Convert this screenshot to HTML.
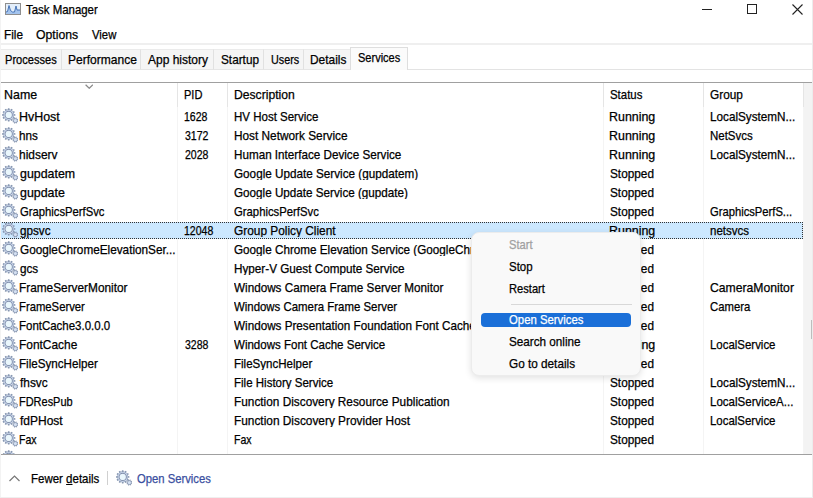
<!DOCTYPE html>
<html><head><meta charset="utf-8">
<style>
html,body{margin:0;padding:0;}
body{width:813px;height:498px;overflow:hidden;position:relative;background:#fff;font-family:"Liberation Sans",sans-serif;}
.t{position:absolute;line-height:1;white-space:nowrap;-webkit-text-stroke:0.25px currentColor;}
.g{position:absolute;}
.a{position:absolute;}
</style></head><body>
<svg width="0" height="0" style="position:absolute">
<defs>
<g id="gear">
<path fill="#8f9db6" d="M16.47 12.99 L16.16 14.01 L15.36 13.80 L14.95 14.30 L15.30 15.05 L14.35 15.55 L13.93 14.84 L13.29 14.90 L13.01 15.67 L11.99 15.36 L12.20 14.56 L11.70 14.15 L10.95 14.50 L10.45 13.55 L11.16 13.13 L11.10 12.49 L10.33 12.21 L10.64 11.19 L11.44 11.40 L11.85 10.90 L11.50 10.15 L12.45 9.65 L12.87 10.36 L13.51 10.30 L13.79 9.53 L14.81 9.84 L14.60 10.64 L15.10 11.05 L15.85 10.70 L16.35 11.65 L15.64 12.07 L15.70 12.71Z M13.41 12.60 A0.01 0.01 0 1 0 13.39 12.60 A0.01 0.01 0 1 0 13.41 12.60Z"/>
<circle cx="13.4" cy="12.6" r="1.6" fill="#d4e0f2"/>
<path fill="#8898b2" d="M13.36 6.13 L13.36 7.67 L12.02 7.80 L11.76 8.78 L12.85 9.56 L12.08 10.89 L10.86 10.34 L10.14 11.06 L10.69 12.28 L9.36 13.05 L8.58 11.96 L7.60 12.22 L7.47 13.56 L5.93 13.56 L5.80 12.22 L4.82 11.96 L4.04 13.05 L2.71 12.28 L3.26 11.06 L2.54 10.34 L1.32 10.89 L0.55 9.56 L1.64 8.78 L1.38 7.80 L0.04 7.67 L0.04 6.13 L1.38 6.00 L1.64 5.02 L0.55 4.24 L1.32 2.91 L2.54 3.46 L3.26 2.74 L2.71 1.52 L4.04 0.75 L4.82 1.84 L5.80 1.58 L5.93 0.24 L7.47 0.24 L7.60 1.58 L8.58 1.84 L9.36 0.75 L10.69 1.52 L10.14 2.74 L10.86 3.46 L12.08 2.91 L12.85 4.24 L11.76 5.02 L12.02 6.00Z M6.71 6.90 A0.01 0.01 0 1 0 6.69 6.90 A0.01 0.01 0 1 0 6.71 6.90Z"/>
<circle cx="6.7" cy="6.9" r="5.0" fill="#ccd8ee"/>
<circle cx="6.7" cy="6.9" r="3.6" fill="none" stroke="#8291ab" stroke-width="1.1"/>
<circle cx="6.7" cy="6.9" r="3.0" fill="#eaf7fc"/>
</g>
</defs>
</svg>
<div class="a" style="left:0;top:0;width:813px;height:24px;background:#fff"></div>
<svg class="a" style="left:5px;top:3px" width="16" height="12" viewBox="0 0 16 12">
<rect x="0.5" y="0.5" width="15" height="11" fill="#e3eefa" stroke="#8e8e8e"/>
<path d="M1 9 L2.5 8.5 L4 2.5 L5.5 7.5 L7.5 9 L9.5 9 L11 3 L12 7 L15 7 L15 11 L1 11Z" fill="#a4c4ee"/>
<path d="M1 9 L2.5 8.5 L4 2.5 L5.5 7.5 L7.5 9 L9.5 9 L11 3 L12 7 L15 7" fill="none" stroke="#3a6ab0" stroke-width="0.9"/>
</svg>
<div class="t" style="top:4.30px;font-size:12.4px;color:#000;left:26.34px;transform:scaleX(0.9224);transform-origin:0 0;">Task Manager</div>
<div class="a" style="left:702px;top:9px;width:10px;height:1px;background:#222"></div>
<div class="a" style="left:747px;top:4px;width:8px;height:8px;border:1px solid #222"></div>
<svg class="a" style="left:792px;top:4px" width="11" height="11" viewBox="0 0 11 11"><path d="M0.5 0.5L10.5 10.5M10.5 0.5L0.5 10.5" stroke="#222" stroke-width="1.1"/></svg>
<div class="t" style="top:29.00px;font-size:12.4px;color:#000;left:3.53px;transform:scaleX(0.9504);transform-origin:0 0;">File</div>
<div class="t" style="top:29.00px;font-size:12.4px;color:#000;left:36.22px;transform:scaleX(0.9874);transform-origin:0 0;">Options</div>
<div class="t" style="top:29.00px;font-size:12.4px;color:#000;left:92.44px;transform:scaleX(0.9125);transform-origin:0 0;">View</div>
<div class="a" style="left:0;top:43px;width:813px;height:2px;background:#efefef"></div>
<div class="a" style="left:0px;top:49px;width:61.6px;height:21px;background:#f5f5f5;border-right:1px solid #e1e1e1;border-top:1px solid #ebebeb;border-bottom:1px solid #e6e6e6;box-sizing:border-box"></div>
<div class="t" style="top:54.00px;font-size:12.4px;color:#000;left:4.69px;transform:scaleX(0.8933);transform-origin:0 0;">Processes</div>
<div class="a" style="left:61.6px;top:49px;width:79.70000000000002px;height:21px;background:#f5f5f5;border-right:1px solid #e1e1e1;border-top:1px solid #ebebeb;border-bottom:1px solid #e6e6e6;box-sizing:border-box"></div>
<div class="t" style="top:54.00px;font-size:12.4px;color:#000;left:67.61px;transform:scaleX(0.9711);transform-origin:0 0;">Performance</div>
<div class="a" style="left:141.3px;top:49px;width:73.1px;height:21px;background:#f5f5f5;border-right:1px solid #e1e1e1;border-top:1px solid #ebebeb;border-bottom:1px solid #e6e6e6;box-sizing:border-box"></div>
<div class="t" style="top:54.00px;font-size:12.4px;color:#000;left:148.37px;transform:scaleX(0.9682);transform-origin:0 0;">App history</div>
<div class="a" style="left:214.4px;top:49px;width:49.599999999999994px;height:21px;background:#f5f5f5;border-right:1px solid #e1e1e1;border-top:1px solid #ebebeb;border-bottom:1px solid #e6e6e6;box-sizing:border-box"></div>
<div class="t" style="top:54.00px;font-size:12.4px;color:#000;left:221.27px;transform:scaleX(0.9510);transform-origin:0 0;">Startup</div>
<div class="a" style="left:264px;top:49px;width:40px;height:21px;background:#f5f5f5;border-right:1px solid #e1e1e1;border-top:1px solid #ebebeb;border-bottom:1px solid #e6e6e6;box-sizing:border-box"></div>
<div class="t" style="top:54.00px;font-size:12.4px;color:#000;left:270.86px;transform:scaleX(0.8710);transform-origin:0 0;">Users</div>
<div class="a" style="left:304px;top:49px;width:46.5px;height:21px;background:#f5f5f5;border-right:1px solid #e1e1e1;border-top:1px solid #ebebeb;border-bottom:1px solid #e6e6e6;box-sizing:border-box"></div>
<div class="t" style="top:54.00px;font-size:12.4px;color:#000;left:310.32px;transform:scaleX(0.9601);transform-origin:0 0;">Details</div>
<div class="a" style="left:350px;top:47px;width:58px;height:23px;background:#fbfbfb;border:1px solid #dedede;border-bottom:none;box-sizing:border-box"></div>
<div class="t" style="top:52.10px;font-size:12.4px;color:#000;left:358.00px;transform:scaleX(0.8891);transform-origin:0 0;">Services</div>
<div class="a" style="left:408px;top:69px;width:405px;height:1px;background:#e3e3e3"></div>
<div class="a" style="left:0;top:82px;width:813px;height:1px;background:#a0a0a0"></div>
<div class="a" style="left:177px;top:83px;width:1px;height:24px;background:#e5e5e5"></div>
<div class="a" style="left:177px;top:107px;width:1px;height:347px;background:#f4f4f4"></div>
<div class="a" style="left:227px;top:83px;width:1px;height:24px;background:#e5e5e5"></div>
<div class="a" style="left:227px;top:107px;width:1px;height:347px;background:#f4f4f4"></div>
<div class="a" style="left:603px;top:83px;width:1px;height:24px;background:#e5e5e5"></div>
<div class="a" style="left:603px;top:107px;width:1px;height:347px;background:#f4f4f4"></div>
<div class="a" style="left:703px;top:83px;width:1px;height:24px;background:#e5e5e5"></div>
<div class="a" style="left:703px;top:107px;width:1px;height:347px;background:#f4f4f4"></div>
<div class="a" style="left:803px;top:83px;width:1px;height:24px;background:#e5e5e5"></div>
<div class="a" style="left:803px;top:107px;width:1px;height:347px;background:#f4f4f4"></div>
<svg class="a" style="left:84.5px;top:83.5px" width="8.5" height="5" viewBox="0 0 8.5 5"><path d="M0.6 0.8L4.25 4.3L7.9 0.8" fill="none" stroke="#8a8a8a" stroke-width="1.2"/></svg>
<div class="t" style="top:89.00px;font-size:12.4px;color:#000;left:3.67px;transform:scaleX(1.0023);transform-origin:0 0;">Name</div>
<div class="t" style="top:89.00px;font-size:12.4px;color:#000;left:183.69px;transform:scaleX(0.8917);transform-origin:0 0;">PID</div>
<div class="t" style="top:89.00px;font-size:12.4px;color:#000;left:233.50px;transform:scaleX(0.9800);transform-origin:0 0;">Description</div>
<div class="t" style="top:89.00px;font-size:12.4px;color:#000;left:609.99px;transform:scaleX(0.9221);transform-origin:0 0;">Status</div>
<div class="t" style="top:89.00px;font-size:12.4px;color:#000;left:710.21px;transform:scaleX(0.9542);transform-origin:0 0;">Group</div>
<div class="a" style="left:804px;top:83px;width:9px;height:371px;background:#f3f3f3"></div>
<div class="a" style="left:811px;top:320px;width:2px;height:19px;background:#bdbdbd"></div>
<svg class="g" style="left:2px;top:108px" width="16" height="16" viewBox="0 0 16 16"><use href="#gear"/></svg>
<div class="t" style="top:110.80px;font-size:12.4px;color:#000;left:19.28px;transform:scaleX(1.0019);transform-origin:0 0;">HvHost</div>
<div class="t" style="top:110.80px;font-size:12.4px;color:#000;left:184.41px;transform:scaleX(0.8492);transform-origin:0 0;">1628</div>
<div class="t" style="top:110.80px;font-size:12.4px;color:#000;left:233.55px;transform:scaleX(0.9284);transform-origin:0 0;width:394.2393253012049px;overflow:hidden;white-space:nowrap;text-overflow:ellipsis;">HV Host Service</div>
<div class="t" style="top:110.80px;font-size:12.4px;color:#000;left:609.47px;transform:scaleX(1.0024);transform-origin:0 0;">Running</div>
<div class="t" style="top:110.80px;font-size:12.4px;color:#000;left:709.83px;transform:scaleX(0.9452);transform-origin:0 0;">LocalSystemN...</div>
<svg class="g" style="left:2px;top:127px" width="16" height="16" viewBox="0 0 16 16"><use href="#gear"/></svg>
<div class="t" style="top:129.80px;font-size:12.4px;color:#000;left:19.48px;transform:scaleX(0.9435);transform-origin:0 0;">hns</div>
<div class="t" style="top:129.80px;font-size:12.4px;color:#000;left:184.81px;transform:scaleX(0.8492);transform-origin:0 0;">3172</div>
<div class="t" style="top:129.80px;font-size:12.4px;color:#000;left:233.52px;transform:scaleX(0.9537);transform-origin:0 0;width:383.7617647058824px;overflow:hidden;white-space:nowrap;text-overflow:ellipsis;">Host Network Service</div>
<div class="t" style="top:129.80px;font-size:12.4px;color:#000;left:609.47px;transform:scaleX(1.0024);transform-origin:0 0;">Running</div>
<div class="t" style="top:129.80px;font-size:12.4px;color:#000;left:709.85px;transform:scaleX(0.9261);transform-origin:0 0;">NetSvcs</div>
<svg class="g" style="left:2px;top:146px" width="16" height="16" viewBox="0 0 16 16"><use href="#gear"/></svg>
<div class="t" style="top:148.80px;font-size:12.4px;color:#000;left:19.46px;transform:scaleX(0.9626);transform-origin:0 0;">hidserv</div>
<div class="t" style="top:148.80px;font-size:12.4px;color:#000;left:184.67px;transform:scaleX(0.8492);transform-origin:0 0;">2028</div>
<div class="t" style="top:148.80px;font-size:12.4px;color:#000;left:233.54px;transform:scaleX(0.9419);transform-origin:0 0;width:388.5663253012048px;overflow:hidden;white-space:nowrap;text-overflow:ellipsis;">Human Interface Device Service</div>
<div class="t" style="top:148.80px;font-size:12.4px;color:#000;left:609.47px;transform:scaleX(1.0024);transform-origin:0 0;">Running</div>
<div class="t" style="top:148.80px;font-size:12.4px;color:#000;left:709.83px;transform:scaleX(0.9452);transform-origin:0 0;">LocalSystemN...</div>
<svg class="g" style="left:2px;top:165px" width="16" height="16" viewBox="0 0 16 16"><use href="#gear"/></svg>
<div class="t" style="top:167.80px;font-size:12.4px;color:#000;left:19.77px;transform:scaleX(0.9997);transform-origin:0 0;">gupdatem</div>
<div class="t" style="top:167.80px;font-size:12.4px;color:#000;left:233.91px;transform:scaleX(0.9448);transform-origin:0 0;width:387.3759999999999px;overflow:hidden;white-space:nowrap;text-overflow:ellipsis;">Google Update Service (gupdatem)</div>
<div class="t" style="top:167.80px;font-size:12.4px;color:#000;left:609.97px;transform:scaleX(0.9519);transform-origin:0 0;">Stopped</div>
<svg class="g" style="left:2px;top:184px" width="16" height="16" viewBox="0 0 16 16"><use href="#gear"/></svg>
<div class="t" style="top:186.80px;font-size:12.4px;color:#000;left:19.77px;transform:scaleX(1.0013);transform-origin:0 0;">gupdate</div>
<div class="t" style="top:186.80px;font-size:12.4px;color:#000;left:233.92px;transform:scaleX(0.9424);transform-origin:0 0;width:388.3772569444444px;overflow:hidden;white-space:nowrap;text-overflow:ellipsis;">Google Update Service (gupdate)</div>
<div class="t" style="top:186.80px;font-size:12.4px;color:#000;left:609.97px;transform:scaleX(0.9519);transform-origin:0 0;">Stopped</div>
<svg class="g" style="left:2px;top:203px" width="16" height="16" viewBox="0 0 16 16"><use href="#gear"/></svg>
<div class="t" style="top:205.80px;font-size:12.4px;color:#000;left:19.74px;transform:scaleX(0.9080);transform-origin:0 0;">GraphicsPerfSvc</div>
<div class="t" style="top:205.80px;font-size:12.4px;color:#000;left:233.93px;transform:scaleX(0.9123);transform-origin:0 0;width:401.1621428571428px;overflow:hidden;white-space:nowrap;text-overflow:ellipsis;">GraphicsPerfSvc</div>
<div class="t" style="top:205.80px;font-size:12.4px;color:#000;left:609.97px;transform:scaleX(0.9519);transform-origin:0 0;">Stopped</div>
<div class="t" style="top:205.80px;font-size:12.4px;color:#000;left:710.24px;transform:scaleX(0.9045);transform-origin:0 0;">GraphicsPerfS...</div>
<div class="a" style="left:0;top:222px;width:803px;height:17px;background:#cce8ff;box-sizing:border-box;border:1px dotted #333;border-left:none"></div>
<svg class="g" style="left:2px;top:222px" width="16" height="16" viewBox="0 0 16 16"><use href="#gear"/></svg>
<div class="t" style="top:224.80px;font-size:12.4px;color:#000;left:19.80px;transform:scaleX(0.9435);transform-origin:0 0;">gpsvc</div>
<div class="t" style="top:224.80px;font-size:12.4px;color:#000;left:184.41px;transform:scaleX(0.8492);transform-origin:0 0;">12048</div>
<div class="t" style="top:224.80px;font-size:12.4px;color:#000;left:233.91px;transform:scaleX(0.9580);transform-origin:0 0;width:382.0568910891089px;overflow:hidden;white-space:nowrap;text-overflow:ellipsis;">Group Policy Client</div>
<div class="t" style="top:224.80px;font-size:12.4px;color:#000;left:609.47px;transform:scaleX(1.0024);transform-origin:0 0;">Running</div>
<div class="t" style="top:224.80px;font-size:12.4px;color:#000;left:710.02px;transform:scaleX(0.9273);transform-origin:0 0;">netsvcs</div>
<svg class="g" style="left:2px;top:241px" width="16" height="16" viewBox="0 0 16 16"><use href="#gear"/></svg>
<div class="t" style="top:243.80px;font-size:12.4px;color:#000;left:19.71px;transform:scaleX(0.9488);transform-origin:0 0;">GoogleChromeElevationSer...</div>
<div class="t" style="top:243.80px;font-size:12.4px;color:#000;left:233.91px;transform:scaleX(0.9435);transform-origin:0 0;width:387.89743589743586px;overflow:hidden;white-space:nowrap;text-overflow:ellipsis;">Google Chrome Elevation Service (GoogleChromeElevationService)</div>
<div class="t" style="top:243.80px;font-size:12.4px;color:#000;left:609.97px;transform:scaleX(0.9519);transform-origin:0 0;">Stopped</div>
<svg class="g" style="left:2px;top:260px" width="16" height="16" viewBox="0 0 16 16"><use href="#gear"/></svg>
<div class="t" style="top:262.80px;font-size:12.4px;color:#000;left:19.80px;transform:scaleX(0.9435);transform-origin:0 0;">gcs</div>
<div class="t" style="top:262.80px;font-size:12.4px;color:#000;left:233.53px;transform:scaleX(0.9453);transform-origin:0 0;width:387.1856028368794px;overflow:hidden;white-space:nowrap;text-overflow:ellipsis;">Hyper-V Guest Compute Service</div>
<div class="t" style="top:262.80px;font-size:12.4px;color:#000;left:609.97px;transform:scaleX(0.9519);transform-origin:0 0;">Stopped</div>
<svg class="g" style="left:2px;top:279px" width="16" height="16" viewBox="0 0 16 16"><use href="#gear"/></svg>
<div class="t" style="top:281.80px;font-size:12.4px;color:#000;left:19.32px;transform:scaleX(0.9549);transform-origin:0 0;">FrameServerMonitor</div>
<div class="t" style="top:281.80px;font-size:12.4px;color:#000;left:234.44px;transform:scaleX(0.9440);transform-origin:0 0;width:387.72731357552584px;overflow:hidden;white-space:nowrap;text-overflow:ellipsis;">Windows Camera Frame Server Monitor</div>
<div class="t" style="top:281.80px;font-size:12.4px;color:#000;left:609.97px;transform:scaleX(0.9519);transform-origin:0 0;">Stopped</div>
<div class="t" style="top:281.80px;font-size:12.4px;color:#000;left:710.19px;transform:scaleX(0.9831);transform-origin:0 0;">CameraMonitor</div>
<svg class="g" style="left:2px;top:298px" width="16" height="16" viewBox="0 0 16 16"><use href="#gear"/></svg>
<div class="t" style="top:300.80px;font-size:12.4px;color:#000;left:19.37px;transform:scaleX(0.9108);transform-origin:0 0;">FrameServer</div>
<div class="t" style="top:300.80px;font-size:12.4px;color:#000;left:234.44px;transform:scaleX(0.9218);transform-origin:0 0;width:397.04039263803685px;overflow:hidden;white-space:nowrap;text-overflow:ellipsis;">Windows Camera Frame Server</div>
<div class="t" style="top:300.80px;font-size:12.4px;color:#000;left:609.97px;transform:scaleX(0.9519);transform-origin:0 0;">Stopped</div>
<div class="t" style="top:300.80px;font-size:12.4px;color:#000;left:710.23px;transform:scaleX(0.9128);transform-origin:0 0;">Camera</div>
<svg class="g" style="left:2px;top:317px" width="16" height="16" viewBox="0 0 16 16"><use href="#gear"/></svg>
<div class="t" style="top:319.80px;font-size:12.4px;color:#000;left:19.35px;transform:scaleX(0.9259);transform-origin:0 0;">FontCache3.0.0.0</div>
<div class="t" style="top:319.80px;font-size:12.4px;color:#000;left:234.44px;transform:scaleX(0.9435);transform-origin:0 0;width:387.8974358974358px;overflow:hidden;white-space:nowrap;text-overflow:ellipsis;">Windows Presentation Foundation Font Cache 3.0.0.0</div>
<div class="t" style="top:319.80px;font-size:12.4px;color:#000;left:609.97px;transform:scaleX(0.9519);transform-origin:0 0;">Stopped</div>
<svg class="g" style="left:2px;top:336px" width="16" height="16" viewBox="0 0 16 16"><use href="#gear"/></svg>
<div class="t" style="top:338.80px;font-size:12.4px;color:#000;left:19.32px;transform:scaleX(0.9613);transform-origin:0 0;">FontCache</div>
<div class="t" style="top:338.80px;font-size:12.4px;color:#000;left:184.81px;transform:scaleX(0.8492);transform-origin:0 0;">3288</div>
<div class="t" style="top:338.80px;font-size:12.4px;color:#000;left:234.44px;transform:scaleX(0.9300);transform-origin:0 0;width:393.5337889847379px;overflow:hidden;white-space:nowrap;text-overflow:ellipsis;">Windows Font Cache Service</div>
<div class="t" style="top:338.80px;font-size:12.4px;color:#000;left:609.47px;transform:scaleX(1.0024);transform-origin:0 0;">Running</div>
<div class="t" style="top:338.80px;font-size:12.4px;color:#000;left:709.86px;transform:scaleX(0.9231);transform-origin:0 0;">LocalService</div>
<svg class="g" style="left:2px;top:355px" width="16" height="16" viewBox="0 0 16 16"><use href="#gear"/></svg>
<div class="t" style="top:357.80px;font-size:12.4px;color:#000;left:19.34px;transform:scaleX(0.9377);transform-origin:0 0;">FileSyncHelper</div>
<div class="t" style="top:357.80px;font-size:12.4px;color:#000;left:233.55px;transform:scaleX(0.9317);transform-origin:0 0;width:392.84790155440413px;overflow:hidden;white-space:nowrap;text-overflow:ellipsis;">FileSyncHelper</div>
<div class="t" style="top:357.80px;font-size:12.4px;color:#000;left:609.97px;transform:scaleX(0.9519);transform-origin:0 0;">Stopped</div>
<svg class="g" style="left:2px;top:374px" width="16" height="16" viewBox="0 0 16 16"><use href="#gear"/></svg>
<div class="t" style="top:376.80px;font-size:12.4px;color:#000;left:20.12px;transform:scaleX(0.9568);transform-origin:0 0;">fhsvc</div>
<div class="t" style="top:376.80px;font-size:12.4px;color:#000;left:233.55px;transform:scaleX(0.9293);transform-origin:0 0;width:393.8616564417178px;overflow:hidden;white-space:nowrap;text-overflow:ellipsis;">File History Service</div>
<div class="t" style="top:376.80px;font-size:12.4px;color:#000;left:609.97px;transform:scaleX(0.9519);transform-origin:0 0;">Stopped</div>
<div class="t" style="top:376.80px;font-size:12.4px;color:#000;left:709.83px;transform:scaleX(0.9452);transform-origin:0 0;">LocalSystemN...</div>
<svg class="g" style="left:2px;top:393px" width="16" height="16" viewBox="0 0 16 16"><use href="#gear"/></svg>
<div class="t" style="top:395.80px;font-size:12.4px;color:#000;left:19.39px;transform:scaleX(0.8847);transform-origin:0 0;">FDResPub</div>
<div class="t" style="top:395.80px;font-size:12.4px;color:#000;left:233.52px;transform:scaleX(0.9543);transform-origin:0 0;width:383.5372149532711px;overflow:hidden;white-space:nowrap;text-overflow:ellipsis;">Function Discovery Resource Publication</div>
<div class="t" style="top:395.80px;font-size:12.4px;color:#000;left:609.97px;transform:scaleX(0.9519);transform-origin:0 0;">Stopped</div>
<div class="t" style="top:395.80px;font-size:12.4px;color:#000;left:709.85px;transform:scaleX(0.9308);transform-origin:0 0;">LocalServiceA...</div>
<svg class="g" style="left:2px;top:412px" width="16" height="16" viewBox="0 0 16 16"><use href="#gear"/></svg>
<div class="t" style="top:414.80px;font-size:12.4px;color:#000;left:20.12px;transform:scaleX(0.9673);transform-origin:0 0;">fdPHost</div>
<div class="t" style="top:414.80px;font-size:12.4px;color:#000;left:233.52px;transform:scaleX(0.9570);transform-origin:0 0;width:382.45745142857146px;overflow:hidden;white-space:nowrap;text-overflow:ellipsis;">Function Discovery Provider Host</div>
<div class="t" style="top:414.80px;font-size:12.4px;color:#000;left:609.97px;transform:scaleX(0.9519);transform-origin:0 0;">Stopped</div>
<div class="t" style="top:414.80px;font-size:12.4px;color:#000;left:709.86px;transform:scaleX(0.9231);transform-origin:0 0;">LocalService</div>
<svg class="g" style="left:2px;top:431px" width="16" height="16" viewBox="0 0 16 16"><use href="#gear"/></svg>
<div class="t" style="top:433.80px;font-size:12.4px;color:#000;left:19.43px;transform:scaleX(0.8513);transform-origin:0 0;">Fax</div>
<div class="t" style="top:433.80px;font-size:12.4px;color:#000;left:233.63px;transform:scaleX(0.8513);transform-origin:0 0;width:429.9177108433735px;overflow:hidden;white-space:nowrap;text-overflow:ellipsis;">Fax</div>
<div class="t" style="top:433.80px;font-size:12.4px;color:#000;left:609.97px;transform:scaleX(0.9519);transform-origin:0 0;">Stopped</div>
<svg class="g" style="left:2px;top:450px" width="16" height="16" viewBox="0 0 16 16"><use href="#gear"/></svg>
<div class="a" style="left:0;top:454px;width:813px;height:44px;background:#fff;border-top:1px solid #a0a0a0;box-sizing:border-box"></div>
<svg class="a" style="left:9px;top:475px" width="11" height="7" viewBox="0 0 11 7"><path d="M0.5 6L5.5 1L10.5 6" fill="none" stroke="#777" stroke-width="1.2"/></svg>
<div class="t" style="top:473.00px;font-size:12.4px;color:#000;left:30.85px;transform:scaleX(0.9268);transform-origin:0 0;">Fewer <u>d</u>etails</div>
<div class="a" style="left:107px;top:471px;width:1px;height:14px;background:#d0d0d0"></div>
<svg class="g" style="left:116px;top:470px" width="16" height="16" viewBox="0 0 16 16"><use href="#gear"/></svg>
<div class="t" style="top:472.70px;font-size:12.4px;color:#3a4fa0;left:137.06px;transform:scaleX(0.9089);transform-origin:0 0;">Open Services</div>
<div class="a" style="left:471px;top:232px;width:170px;height:144px;background:#f9f9f9;border-radius:8px;box-shadow:0 2px 7px rgba(0,0,0,0.12);border:1px solid #ececec;box-sizing:border-box"></div>
<div class="t" style="top:239.40px;font-size:12.4px;color:#a0a0a0;left:509.20px;transform:scaleX(0.9004);transform-origin:0 0;">Start</div>
<div class="t" style="top:261.30px;font-size:12.4px;color:#000;left:509.18px;transform:scaleX(0.9252);transform-origin:0 0;">Stop</div>
<div class="t" style="top:283.10px;font-size:12.4px;color:#000;left:508.78px;transform:scaleX(0.8985);transform-origin:0 0;">Restart</div>
<div class="a" style="left:511px;top:304px;width:121px;height:1px;background:#d8d8d8"></div>
<div class="a" style="left:481px;top:313px;width:150px;height:14px;background:#1a6fd8;border-radius:4px"></div>
<div class="t" style="top:314.10px;font-size:12.4px;color:#fff;left:508.86px;transform:scaleX(0.9151);transform-origin:0 0;">Open Services</div>
<div class="t" style="top:335.80px;font-size:12.4px;color:#000;left:508.87px;transform:scaleX(0.9446);transform-origin:0 0;">Search online</div>
<div class="t" style="top:357.90px;font-size:12.4px;color:#000;left:508.81px;transform:scaleX(0.9494);transform-origin:0 0;">Go to details</div>
<div class="a" style="left:812px;top:0;width:1px;height:498px;background:#ececec"></div>
<div class="a" style="left:0;top:0;width:1px;height:498px;background:#f3f3f3"></div>
<div class="a" style="left:0;top:497px;width:813px;height:1px;background:#efefef"></div>
</body></html>
